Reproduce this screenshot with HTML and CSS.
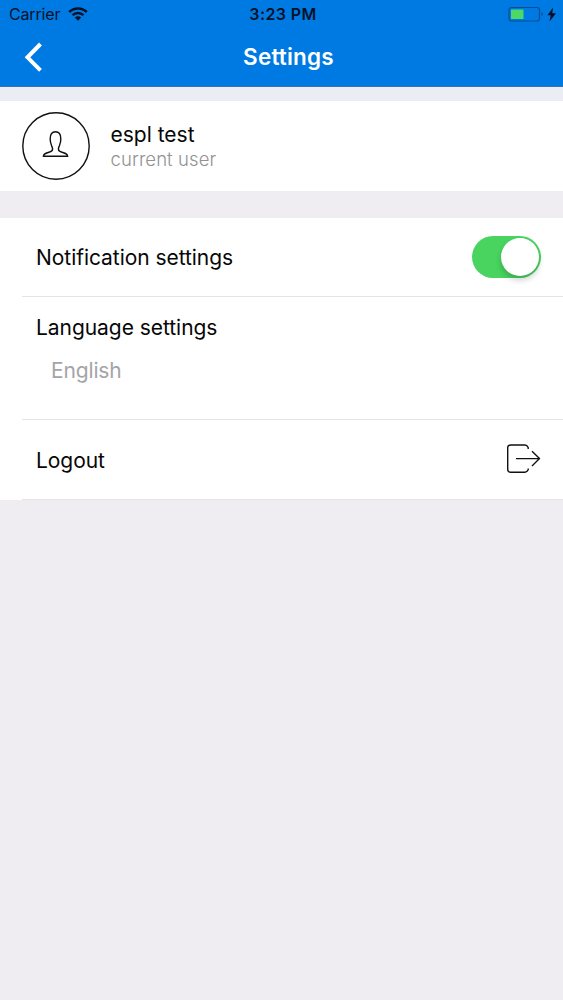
FILE: index.html
```html
<!DOCTYPE html>
<html lang="en">
<head>
<meta charset="utf-8">
<title>Settings</title>
<link rel="stylesheet" href="styles.css">
</head>
<body>
<header class="header">
  <div class="status">
    <div class="carrier"><span>Carrier</span>
      <svg class="wifi" width="20" height="14" viewBox="0 0 20 14"><g fill="none" stroke="#06122a" stroke-width="2.5"><path d="M1.2 5C6.2.2 13.8.2 18.8 5"/><path d="M4.5 8.2c3.2-3 7.8-3 11 0"/></g><path d="M6.8 10.6c1.8-1.7 4.6-1.7 6.4 0L10 13.8z" fill="#06122a"/></svg>
    </div>
    <div class="time">3:23 PM</div>
    <div class="power">
      <svg width="50" height="17" viewBox="0 0 50 17"><rect x="2" y="1.5" width="30.5" height="13.5" rx="2.5" fill="none" stroke="#0b4c91" stroke-width="1.2"/><rect x="4" y="3.5" width="12.5" height="9.5" rx=".6" fill="#4cd964"/><path d="M34.500 6q1.400.3 1.400 2t-1.400 2z" fill="#0b4c91"/><path d="M46 1.500 40.500 9.200h3.200L42.500 15.500l6.500-8.300h-3.700z" fill="#06122a"/></svg>
    </div>
  </div>
  <div class="navbar">
    <svg class="back" width="20" height="30" viewBox="0 0 20 30"><path d="M16.500 2 3.500 15.300l13 13" fill="none" stroke="#fff" stroke-width="4"/></svg>
    <h1 class="title">Settings</h1>
  </div>
</header>
<main>
  <section class="profile">
    <svg class="avatar" width="68" height="68" viewBox="0 0 68 68" fill="none" stroke="#111" stroke-width="1.4" stroke-linejoin="round"><circle cx="34" cy="34" r="33.2"/><path d="M21.300 44.300c.4-2.600 2.700-3.300 5.700-4 2.600-.6 3.600-1.300 3.600-3.300 0-1.600-.9-2.500-1.300-4.200-.7-1.500-1.100-2.700-1.100-6.100 0-4.300 2-6.900 5.300-6.900s5.300 2.600 5.300 6.900c0 3.400-.4 4.600-1.100 6.100-.4 1.700-1.300 2.600-1.300 4.200 0 2 1 2.700 3.600 3.300 3 .7 5.300 1.400 5.700 4z"/></svg>
    <div class="identity"><div class="name">espl test</div><div class="role">current user</div></div>
  </section>
  <section class="list">
    <div class="row notification"><span class="label">Notification settings</span><div class="switch"><div class="knob"></div></div></div>
    <div class="row language"><span class="label">Language settings</span><span class="value">English</span></div>
    <div class="row logout"><span class="label logout-label">Logout</span>
      <svg class="exit" width="36" height="32" viewBox="0 0 36 32"><path d="M23.200 6V4.500Q22 2 20 2H6Q2.700 2 2.700 5v21.300q0 3 3.300 3h14q2 0 3.200-2.500v-1.300M11 15.600H34.500M27 8.300l7.500 7.300-7.500 7.500" fill="none" stroke="#111" stroke-width="1.4" stroke-linejoin="round"/></svg>
    </div>
  </section>
</main>
</body>
</html>
```

FILE: styles.css
```css
* { box-sizing: border-box; }
body { margin: 0; min-height: 1000px; background: #efedf1; color: #070707; font-family: Inter, "Liberation Sans", sans-serif; }
svg { display: block; }
main { border-top: 14px solid #ececf5; }
.header { height: 87px; background: #007ae3; border-bottom: 1px solid #2c77bb; color: #06122a; }
.status { display: grid; grid-template-columns: 1fr auto 1fr; height: 28px; padding: 0 6px 0 9px; align-items: center; }
.carrier { display: flex; align-items: center; gap: 8px; font-size: 16px; letter-spacing: -.15px; }
.wifi { margin-bottom: 1px; }
.time { font-size: 16px; font-weight: 600; letter-spacing: .4px; }
.power { display: flex; justify-content: flex-end; }
.navbar { display: grid; grid-template-columns: 60px 1fr 46px; height: 57px; align-items: center; }
.back { margin: 1px 0 0 24px; }
.title { margin: 0; color: #fff; font-size: 22.5px; line-height: 28px; font-weight: 600; letter-spacing: .2px; text-align: center; }
.profile { display: flex; align-items: center; height: 90px; margin-bottom: 27px; padding-left: 22px; background: #fff; }
.identity { margin-left: 20.5px; }
.name { font-size: 21px; line-height: 26px; }
.role { color: #929292; font-size: 18.5px; line-height: 23px; font-weight: 300; letter-spacing: .1px; }
.list { background: #fff; }
.row { display: flex; margin-left: 22px; padding: 1px 22px 0 14px; border-bottom: 1px solid #e5e5e7; align-items: center; justify-content: space-between; }
.notification { height: 79px; }
.language { height: 123px; padding-top: 16px; flex-direction: column; align-items: flex-start; justify-content: flex-start; }
.logout { height: 80px; padding-top: 2px; }
.exit { margin-bottom: 4px; }
.label { font-size: 21px; line-height: 30px; letter-spacing: -.05px; }
.value { margin: 13px 0 0 15px; color: #a4a4a8; font-size: 21px; line-height: 30px; letter-spacing: -.15px; }
.switch { display: flex; justify-content: flex-end; width: 69px; height: 42px; margin-bottom: 2px; padding: 2px; border-radius: 21px; background: #48d45f; }
.knob { width: 38px; height: 38px; border-radius: 50%; background: #fff; box-shadow: 0 4px 6px rgba(0,0,0,.2); }
```
